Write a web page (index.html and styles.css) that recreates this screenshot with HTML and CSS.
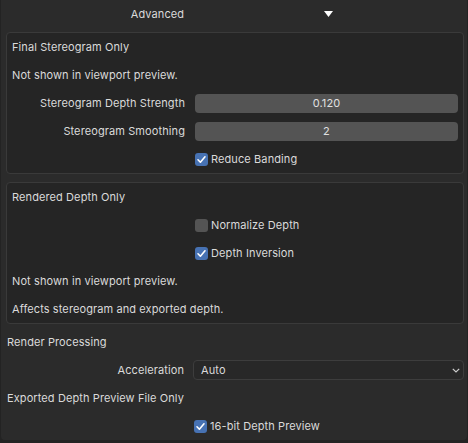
FILE: index.html
```html
<!DOCTYPE html>
<html>
<head>
<meta charset="utf-8">
<link rel="stylesheet" href="styles.css">
</head>
<body>
<div class="root">
  <div class="header">
    <div class="header-label">Advanced</div>
    <div class="header-arrow"><svg width="9" height="6" viewBox="0 0 9 6"><path d="M0 0 H9 L4.5 6 Z" fill="#ffffff"/></svg></div>
  </div>

  <div class="box">
    <div class="row text">Final Stereogram Only</div>
    <div class="row text">Not shown in viewport preview.</div>
    <div class="row prop">
      <div class="lbl">Stereogram Depth Strength</div>
      <div class="field">0.120</div>
    </div>
    <div class="row prop">
      <div class="lbl">Stereogram Smoothing</div>
      <div class="field">2</div>
    </div>
    <div class="row prop">
      <div class="lbl"></div>
      <div class="check on"><span class="cb"><svg width="13" height="13" viewBox="0 0 13 13"><path d="M3 6.8 L5.4 9.2 L10 3.8" fill="none" stroke="#fff" stroke-width="1.6" stroke-linecap="round" stroke-linejoin="round"/></svg></span>Reduce Banding</div>
    </div>
  </div>

  <div class="box second">
    <div class="row text">Rendered Depth Only</div>
    <div class="row prop">
      <div class="lbl"></div>
      <div class="check"><span class="cb"></span>Normalize Depth</div>
    </div>
    <div class="row prop">
      <div class="lbl"></div>
      <div class="check on"><span class="cb"><svg width="13" height="13" viewBox="0 0 13 13"><path d="M3 6.8 L5.4 9.2 L10 3.8" fill="none" stroke="#fff" stroke-width="1.6" stroke-linecap="round" stroke-linejoin="round"/></svg></span>Depth Inversion</div>
    </div>
    <div class="row text">Not shown in viewport preview.</div>
    <div class="row text">Affects stereogram and exported depth.</div>
  </div>

  <div class="outer">
    <div class="row text">Render Processing</div>
    <div class="row prop wide">
      <div class="lbl">Acceleration</div>
      <div class="dropdown"><span>Auto</span><svg width="8" height="5" viewBox="0 0 8 5"><path d="M0.8 0.8 L4 4 L7.2 0.8" fill="none" stroke="#cfcfcf" stroke-width="1.2"/></svg></div>
    </div>
    <div class="row text">Exported Depth Preview File Only</div>
    <div class="row prop wide">
      <div class="lbl"></div>
      <div class="check on"><span class="cb"><svg width="13" height="13" viewBox="0 0 13 13"><path d="M3 6.8 L5.4 9.2 L10 3.8" fill="none" stroke="#fff" stroke-width="1.6" stroke-linecap="round" stroke-linejoin="round"/></svg></span>16-bit Depth Preview</div>
    </div>
  </div>
</div>
</body>
</html>
```

FILE: styles.css
```css
html, body {
  margin: 0;
  padding: 0;
  background: #232323;
}
body {
  width: 468px;
  height: 443px;
  overflow: hidden;
  font-family: Inter, "Noto Sans", sans-serif;
  font-size: 11px;
  letter-spacing: 0.1px;
  color: #dadada;
}
.root {
  width: 466px;
  height: 440px;
  margin-left: 1px;
  background: #2b2b2b;
  border-radius: 0 0 4px 4px;
  display: flex;
  flex-direction: column;
}
.header {
  height: 28px;
  display: flex;
  align-items: center;
}
.header-label {
  width: 313px;
  text-align: center;
}
.header-arrow {
  display: flex;
  align-items: center;
  margin-left: 10px;
}
.box {
  margin: 4px 3px 0 5px;
  border: 1px solid #3a3a3a;
  border-radius: 4px;
  background: #252525;
  display: flex;
  flex-direction: column;
}
.box.second {
  margin-top: 8px;
}
.outer {
  margin-top: 4px;
  display: flex;
  flex-direction: column;
}
.row {
  height: 28px;
  display: flex;
  align-items: center;
}
.row.text {
  padding-left: 5px;
}
.outer .row.text {
  padding-left: 6px;
}
.prop .lbl {
  width: 178px;
  text-align: right;
  flex: none;
}
.prop .field {
  margin-left: 10px;
  width: 263px;
  height: 19px;
  border-radius: 4px;
  background: #545454;
  color: #e0e0e0;
  display: flex;
  align-items: center;
  justify-content: center;
}
.check {
  margin-left: 10px;
  display: flex;
  align-items: center;
}
.cb {
  width: 13px;
  height: 13px;
  border-radius: 3px;
  background: #545454;
  margin-right: 3px;
  display: flex;
}
.check.on .cb {
  background: #4772b3;
}
.wide .lbl {
  width: 183px;
}
.wide .check {
  margin-left: 10px;
}
.dropdown {
  margin-left: 9px;
  width: 259px;
  height: 18px;
  border: 1px solid #3d3d3d;
  border-radius: 4px;
  background: #282828;
  display: flex;
  align-items: center;
  justify-content: space-between;
  padding: 0 3px 0 7px;
  box-sizing: content-box;
}
```
